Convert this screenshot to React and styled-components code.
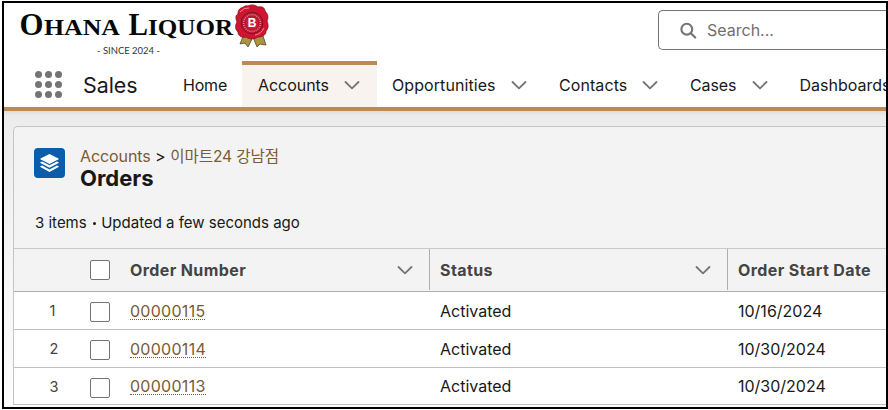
import React from 'react';
import styled, { createGlobalStyle } from 'styled-components';

const GlobalStyle = createGlobalStyle`
  *, *::before, *::after { box-sizing: border-box; }
  body {
    margin: 0;
    overflow: hidden;
    background: #fff;
    font-family: Inter, "Noto Sans CJK KR", sans-serif;
    color: #181818;
  }
`;

const Frame = styled.div`
  width: 888px;
  height: 410px;
  padding: 1px 0 1px 2px;
  background: #fff;
`;

const Screen = styled.div`
  display: flex;
  flex-direction: column;
  width: 886px;
  height: 408px;
  overflow: hidden;
  border: 2px solid #000;
  background: #fff;
`;

const TopBar = styled.header`
  display: flex;
  justify-content: space-between;
  flex: none;
  height: 58px;
  padding-left: 13px;
`;

const SearchBox = styled.div`
  display: flex;
  align-items: center;
  gap: 10px;
  width: 228px;
  height: 40px;
  margin-top: 7px;
  padding-left: 21px;
  border: 1px solid #747474;
  border-right: 0;
  border-radius: 5px 0 0 5px;
  color: #6f6f6f;
  font-size: 16px;
  white-space: nowrap;
`;

const NavBar = styled.nav`
  display: flex;
  flex: none;
  height: 50px;
  padding-left: 31px;
  border-bottom: 4px solid #ba8b54;
  overflow: hidden;
`;

const Launcher = styled.div`
  flex: none;
  display: grid;
  grid-template-columns: repeat(3, 7px);
  grid-auto-rows: 7px;
  gap: 3px;
  width: 48px;
  padding-top: 9.5px;
`;

const Dot = styled.span`
  border-radius: 50%;
  background: #747474;
`;

const AppName = styled.div`
  flex: none;
  width: 85px;
  font-size: 21.4px;
  line-height: 48px;
  letter-spacing: -0.05px;
`;

const NavItem = styled.div`
  display: flex;
  align-items: center;
  justify-content: space-between;
  flex: none;
  width: ${(p) => p.$width}px;
  padding: ${(p) => (p.$active ? '0 17px 3px 16px' : '1px 17px 0 15px')};
  border-top: ${(p) => (p.$active ? '4px solid #ba8b54' : '0')};
  background: ${(p) => (p.$active ? '#f8f3ef' : 'transparent')};
  font-size: 16px;
  letter-spacing: ${(p) => p.$spacing || 0}px;
  white-space: nowrap;
`;

const Page = styled.main`
  flex: 1;
  min-height: 0;
  padding: 15px 0 0 9px;
  background: linear-gradient(#dedede 0, #ebebeb 5px, #eeeeee 20px, #f3f3f3 110px, #fdfdfd 100%);
`;

const Card = styled.section`
  height: 279px;
  border: 1px solid #c4c4c4;
  border-right: 0;
  border-radius: 5px 0 0 0;
  background: #f3f3f3;
`;

const CardHeader = styled.div`
  height: 121px;
  padding: 21px 0 0 20px;
`;

const TitleRow = styled.div`
  display: flex;
  gap: 15px;
`;

const IconTile = styled.div`
  width: 31px;
  height: 30px;
  border-radius: 4px;
  background: #0b5cab;
`;

const Crumbs = styled.div`
  height: 18px;
  margin-top: -1px;
  font-size: 16px;
  line-height: 19px;
  white-space: pre;
`;

const CrumbLink = styled.a`
  color: #7a5b34;
  font-size: ${(p) => (p.$korean ? '15.6px' : '16px')};
  letter-spacing: ${(p) => (p.$korean ? '-0.1px' : '-0.1px')};
`;

const Title = styled.h1`
  margin: 0;
  font-size: 22px;
  line-height: 27px;
  font-weight: 700;
`;

const Summary = styled.div`
  margin: 21px 0 0 1px;
  font-size: 15px;
  line-height: 20px;
`;

const Bullet = styled.span`
  display: inline-block;
  width: 3px;
  height: 3px;
  margin: 0 5.5px 3px 6px;
  border-radius: 50%;
  background: #181818;
`;

const Row = styled.div`
  display: grid;
  grid-template-columns: 76px 40px 300px 298px 1fr;
  align-items: center;
  height: ${(p) => p.$height}px;
  border-bottom: 1px solid #c0c0c0;
  background: #fff;
  font-size: 16px;
`;

const HeadRow = styled(Row)`
  height: 44px;
  border-top: 1px solid #c9c9c9;
  border-bottom-color: #aeaeae;
  background: #f3f3f3;
  color: #444;
  font-weight: 700;
  letter-spacing: 0.4px;
`;

const HeadCell = styled.div`
  display: flex;
  align-items: center;
  justify-content: space-between;
  align-self: start;
  height: 41px;
  padding: 1px ${(p) => p.$end || 0}px 0 ${(p) => p.$start}px;
  border-right: ${(p) => (p.$end ? '1px solid #aeaeae' : '0')};
  white-space: nowrap;
`;

const Cell = styled.div`
  padding-left: ${(p) => p.$start}px;
  line-height: 20px;
`;

const RowNumber = styled.div`
  padding-left: 35.5px;
  color: #444;
  font-size: 14.5px;
`;

const Checkbox = styled.span`
  display: block;
  width: 20px;
  height: 20px;
  margin-top: ${(p) => (p.$head ? 0 : 3)}px;
  border: 1px solid #747474;
  border-radius: 2px;
  background: #fff;
`;

const OrderLink = styled.a`
  display: inline-block;
  height: 18px;
  line-height: 18px;
  border-bottom: 1px dotted #7a5b34;
  color: #7a5b34;
  letter-spacing: 0.28px;
`;

const Logo = () => (
  <svg width="260" height="56" viewBox="17 3 260 56">
    <g fontFamily='"Liberation Serif", serif' fontWeight="700" fill="#080808">
      <text x="19.5" y="35" fontSize="31" textLength="24" lengthAdjust="spacingAndGlyphs">O</text>
      <text x="44" y="35" fontSize="24" textLength="76" lengthAdjust="spacingAndGlyphs">HANA</text>
      <text x="128.5" y="35" fontSize="31" textLength="19.5" lengthAdjust="spacingAndGlyphs">L</text>
      <text x="148" y="35" fontSize="24" textLength="85" lengthAdjust="spacingAndGlyphs">IQUOR</text>
    </g>
    <text x="97" y="53.5" fontFamily="Lato, sans-serif" fontSize="10" fill="#333" textLength="63" lengthAdjust="spacingAndGlyphs">- SINCE 2024 -</text>
    <path d="M244 34l-4 10 5-1 3 4 5-10 4 10 3-3 6 1-4-12z" fill="#ad9240" stroke="#51472d" strokeWidth=".8" />
    <path d="M241 8c3 0 3-3 7-2 4-2 7-1 10 1 4-1 7 1 7 4 4 4 3 8 2 10 2 5 1 8-1 10 0 5-5 6-8 6-5 3-9 2-12 0-4 1-8-1-8-5-4-4-2-8-1-10-2-5-1-7 1-8 0-3 1-5 3-6z" fill="#cf1531" stroke="#84101e" strokeWidth=".8" />
    <path d="M240 12q4-5 9-4M264 28q-3 6-9 7" fill="none" stroke="#ff8791" strokeWidth="1" />
    <circle cx="252" cy="23" r="10.8" fill="#bd1430" stroke="#7e1424" strokeWidth="1" />
    <circle cx="252" cy="23" r="8.4" fill="none" stroke="#d98a90" strokeWidth="1.6" strokeDasharray="1 1.1" />
    <circle cx="252" cy="23" r="6" fill="#d31a37" />
    <text x="252" y="27.3" textAnchor="middle" fontFamily='"Liberation Sans", sans-serif' fontWeight="700" fontSize="12" fill="#fff">B</text>
  </svg>
);

const Chevron = () => (
  <svg width="16" height="10" viewBox="0 0 16 10" fill="none" stroke="#747474" strokeWidth="1.8" strokeLinecap="round" strokeLinejoin="round">
    <path d="M1.5 2l6.5 6.3L14.5 2" />
  </svg>
);

const SearchIcon = () => (
  <svg width="17" height="17" viewBox="0 0 17 17" fill="none" stroke="#747474" strokeWidth="2.1" strokeLinecap="round">
    <circle cx="6.8" cy="7.2" r="5.4" />
    <path d="M10.8 11.2l4.4 4.4" />
  </svg>
);

const OrdersIcon = () => (
  <svg width="31" height="30" viewBox="0 0 31 30" fill="#fff">
    <path d="M15.5 6l9 4.5q.6.4 0 .8l-9 4.7-9-4.7q-.6-.4 0-.8z" />
    <path d="M6.4 14.2l1.7-.7 7.4 3.8 7.4-3.8 1.7.7q.6.4 0 .8l-9.1 4.8L6.4 15q-.6-.4 0-.8z" />
    <path d="M6.4 18.3l1.7-.7 7.4 3.8 7.4-3.8 1.7.7q.6.4 0 .8l-9.1 4.8-9.1-4.8q-.6-.4 0-.8z" />
  </svg>
);

const tabs = [
  { label: 'Home', width: 74, spacing: -0.2, menu: false },
  { label: 'Accounts', width: 135, active: true, spacing: -0.05, menu: true },
  { label: 'Opportunities', width: 167, spacing: 0.08, menu: true },
  { label: 'Contacts', width: 131, spacing: 0.08, menu: true },
  { label: 'Cases', width: 109.5, spacing: -0.1, menu: true },
  { label: 'Dashboards', width: 140, menu: false },
];

const orders = [
  { number: '00000115', date: '10/16/2024', height: 38 },
  { number: '00000114', date: '10/30/2024', height: 38 },
  { number: '00000113', date: '10/30/2024', height: 37 },
];

export default function App() {
  return (
    <Frame>
      <GlobalStyle />
      <Screen>
        <TopBar>
          <Logo />
          <SearchBox><SearchIcon />Search...</SearchBox>
        </TopBar>
        <NavBar>
          <Launcher>{Array.from({ length: 9 }, (_, i) => <Dot key={i} />)}</Launcher>
          <AppName>Sales</AppName>
          {tabs.map((t) => (
            <NavItem key={t.label} $width={t.width} $active={t.active} $spacing={t.spacing}>
              {t.label}
              {t.menu && <Chevron />}
            </NavItem>
          ))}
        </NavBar>
        <Page>
          <Card>
            <CardHeader>
              <TitleRow>
                <IconTile><OrdersIcon /></IconTile>
                <div>
                  <Crumbs>
                    <CrumbLink>Accounts</CrumbLink>{' > '}<CrumbLink $korean>이마트24 강남점</CrumbLink>
                  </Crumbs>
                  <Title>Orders</Title>
                </div>
              </TitleRow>
              <Summary>3 items<Bullet />Updated a few seconds ago</Summary>
            </CardHeader>
            <HeadRow>
              <span />
              <Checkbox $head />
              <HeadCell $start={0} $end={16}>Order Number<Chevron /></HeadCell>
              <HeadCell $start={10} $end={16}>Status<Chevron /></HeadCell>
              <HeadCell $start={10}>Order Start Date</HeadCell>
            </HeadRow>
            {orders.map((o, i) => (
              <Row key={o.number} $height={o.height}>
                <RowNumber>{i + 1}</RowNumber>
                <Checkbox />
                <Cell $start={0}><OrderLink>{o.number}</OrderLink></Cell>
                <Cell $start={10}>Activated</Cell>
                <Cell $start={10}>{o.date}</Cell>
              </Row>
            ))}
          </Card>
        </Page>
      </Screen>
    </Frame>
  );
}
